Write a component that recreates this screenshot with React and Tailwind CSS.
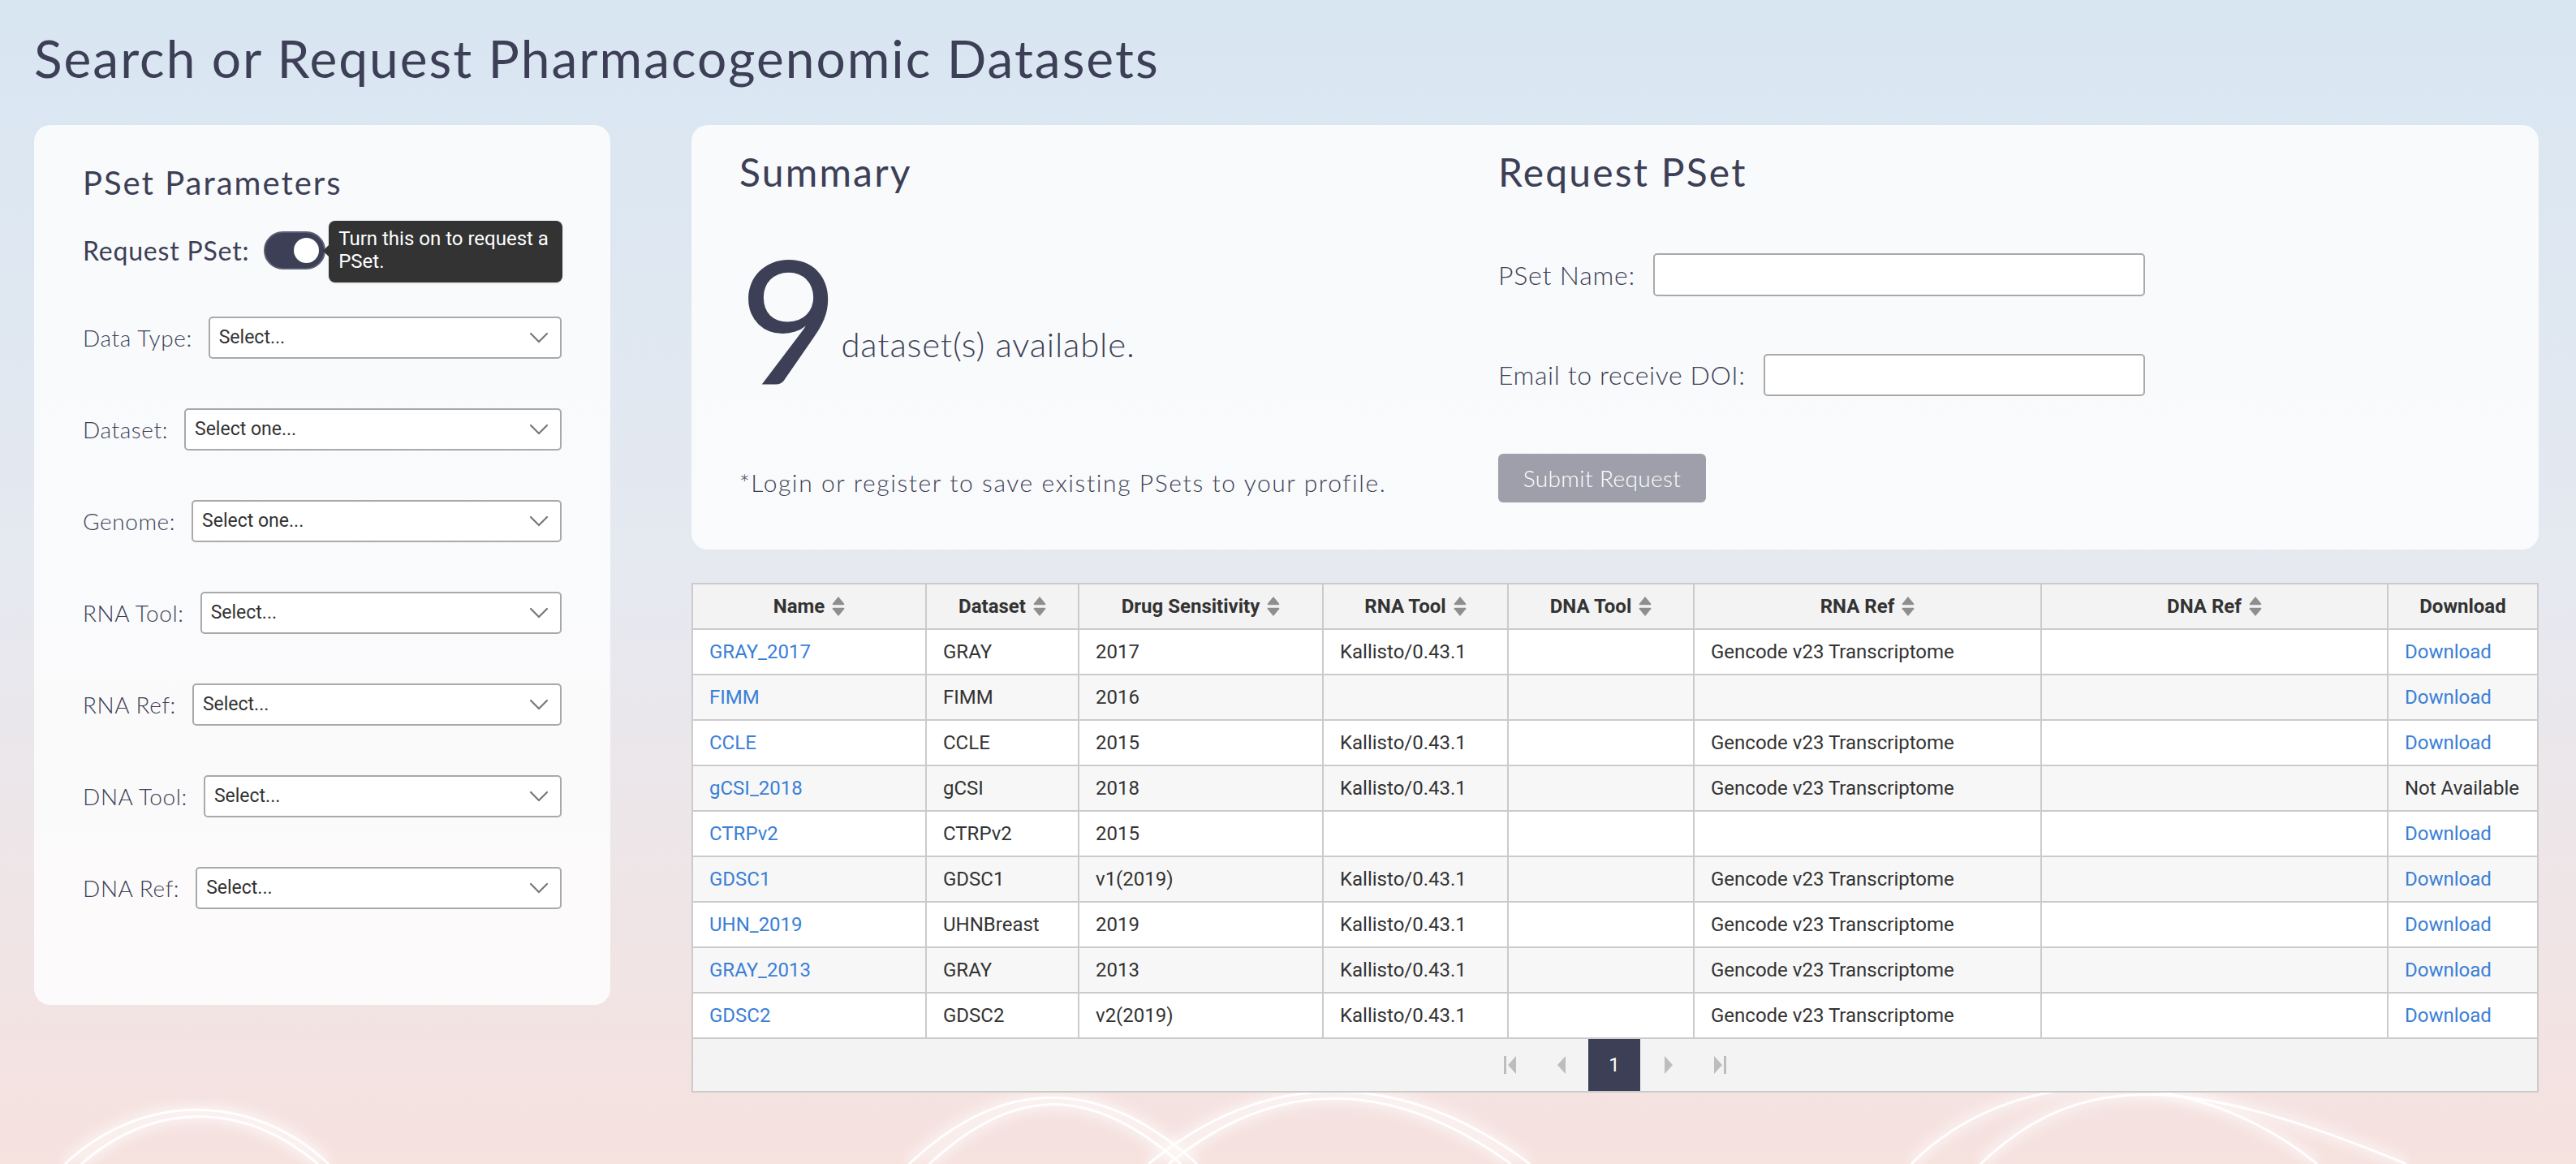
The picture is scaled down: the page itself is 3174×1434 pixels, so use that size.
import React from 'react';

const rows = [
  { name: 'GRAY_2017', dataset: 'GRAY', drug: '2017', rnaTool: 'Kallisto/0.43.1', rnaRef: 'Gencode v23 Transcriptome', dl: true },
  { name: 'FIMM', dataset: 'FIMM', drug: '2016', rnaTool: '', rnaRef: '', dl: true },
  { name: 'CCLE', dataset: 'CCLE', drug: '2015', rnaTool: 'Kallisto/0.43.1', rnaRef: 'Gencode v23 Transcriptome', dl: true },
  { name: 'gCSI_2018', dataset: 'gCSI', drug: '2018', rnaTool: 'Kallisto/0.43.1', rnaRef: 'Gencode v23 Transcriptome', dl: false },
  { name: 'CTRPv2', dataset: 'CTRPv2', drug: '2015', rnaTool: '', rnaRef: '', dl: true },
  { name: 'GDSC1', dataset: 'GDSC1', drug: 'v1(2019)', rnaTool: 'Kallisto/0.43.1', rnaRef: 'Gencode v23 Transcriptome', dl: true },
  { name: 'UHN_2019', dataset: 'UHNBreast', drug: '2019', rnaTool: 'Kallisto/0.43.1', rnaRef: 'Gencode v23 Transcriptome', dl: true },
  { name: 'GRAY_2013', dataset: 'GRAY', drug: '2013', rnaTool: 'Kallisto/0.43.1', rnaRef: 'Gencode v23 Transcriptome', dl: true },
  { name: 'GDSC2', dataset: 'GDSC2', drug: 'v2(2019)', rnaTool: 'Kallisto/0.43.1', rnaRef: 'Gencode v23 Transcriptome', dl: true },
];

const columns = ['Name', 'Dataset', 'Drug Sensitivity', 'RNA Tool', 'DNA Tool', 'RNA Ref', 'DNA Ref', 'Download'];

const filters = [
  { label: 'Data Type:', placeholder: 'Select...' },
  { label: 'Dataset:', placeholder: 'Select one...' },
  { label: 'Genome:', placeholder: 'Select one...' },
  { label: 'RNA Tool:', placeholder: 'Select...' },
  { label: 'RNA Ref:', placeholder: 'Select...' },
  { label: 'DNA Tool:', placeholder: 'Select...' },
  { label: 'DNA Ref:', placeholder: 'Select...' },
];

const gridCols = 'grid grid-cols-[288px_188px_301px_228px_229px_428px_427px_1fr]';

function SortIcon() {
  return (
    <svg width="16" height="26" viewBox="0 0 16 26" className="shrink-0">
      <path d="M8 1 L15.2 9.8 Q15.8 11.2 14.3 11.2 H1.7 Q0.2 11.2 0.8 9.8 Z" fill="#8e8e8e" />
      <path d="M8 25 L15.2 16.2 Q15.8 14.8 14.3 14.8 H1.7 Q0.2 14.8 0.8 16.2 Z" fill="#8e8e8e" />
    </svg>
  );
}

function Chevron() {
  return (
    <svg width="24" height="14" viewBox="0 0 24 14" className="shrink-0">
      <path d="M2 2 L12 12 L22 2" fill="none" stroke="#777" strokeWidth="2.2" strokeLinecap="round" />
    </svg>
  );
}

function Waves() {
  return (
    <svg className="absolute inset-0 w-full h-full pointer-events-none" viewBox="0 0 3174 1434" preserveAspectRatio="none">
      <defs>
        <filter id="glow" x="-20%" y="-20%" width="140%" height="140%">
          <feGaussianBlur stdDeviation="7" />
        </filter>
      </defs>
      {[
        'M80 1434 C175 1345 310 1345 405 1434',
        'M100 1434 C190 1356 300 1356 392 1434',
        'M1120 1434 C1235 1325 1355 1325 1475 1434',
        'M1145 1434 C1250 1336 1345 1336 1455 1434',
        'M1415 1434 C1560 1315 1725 1315 1885 1434',
        'M1440 1434 C1572 1326 1712 1326 1862 1434',
        'M2355 1434 C2480 1308 2700 1308 2855 1434',
        'M2440 1434 C2560 1320 2690 1320 2965 1434',
      ].map((d, i) => (
        <g key={i}>
          <path d={d} fill="none" stroke="#ffffff" strokeWidth="12" opacity="0.55" filter="url(#glow)" />
          <path d={d} fill="none" stroke="#ffffff" strokeWidth="3" opacity="0.9" />
        </g>
      ))}
    </svg>
  );
}

export default function App() {
  return (
    <div className="relative min-h-screen w-full overflow-hidden bg-gradient-to-b from-[#d8e6f2] via-[#e6e9f0] to-[#f6e2df] text-[#3d3f56] font-['Lato',sans-serif]">
      <Waves />
      <div className="relative pl-[42px] pr-[46px] pt-[40px]">
        {/* Page title */}
        <h1 className="text-[64px] leading-none font-normal tracking-[2px]">
          Search or Request Pharmacogenomic Datasets
        </h1>

        <div className="flex gap-[100px] mt-[50px]">
          {/* Parameters panel */}
          <aside className="w-[710px] h-[1084px] shrink-0 rounded-[20px] bg-white/80 px-[60px] pt-[51px]">
            <h2 className="text-[40px] leading-none font-normal tracking-[2px]">PSet Parameters</h2>

            <div className="flex items-center gap-[18px] mt-[40px] h-[47px]">
              <span className="text-[32px] leading-none tracking-[0.8px]">Request PSet:</span>
              <div className="relative">
                <div className="w-[76px] h-[47px] rounded-full bg-[#3d3f56] border-2 border-[#5b5d71] flex items-center justify-end pr-[6px]">
                  <div className="w-[31px] h-[31px] rounded-full bg-white" />
                </div>
                <div className="absolute left-[80px] top-[-13px] w-[288px] h-[76px] rounded-[8px] bg-[#333333] px-[12px] pt-[8px] text-white text-[24px] leading-[28px] font-['Roboto',sans-serif] shadow">
                  <div className="absolute left-[-7px] top-[30px] w-0 h-0 border-y-[7px] border-y-transparent border-r-[7px] border-r-[#333333]" />
                  Turn this on to request a PSet.
                </div>
              </div>
            </div>

            <div className="flex flex-col gap-[61px] mt-[58px]">
              {filters.map((f) => (
                <div key={f.label} className="flex items-center gap-[20px] h-[52px]">
                  <span className="text-[28px] leading-none font-light tracking-[0.6px] whitespace-nowrap">{f.label}</span>
                  <div className="flex-1 h-[52px] bg-white border-2 border-[#a9a9a9] rounded-[5px] flex items-center justify-between pl-[11px] pr-[14px] font-['Roboto',sans-serif] text-[23px] text-[#333]">
                    <span>{f.placeholder}</span>
                    <Chevron />
                  </div>
                </div>
              ))}
            </div>
          </aside>

          {/* Main column */}
          <main className="flex-1 min-w-0">
            <section className="h-[523px] rounded-[20px] bg-white/80 pl-[59px] pt-[34px] flex">
              <div className="w-[935px] shrink-0">
                <h2 className="text-[48px] leading-none font-normal tracking-[2.2px]">Summary</h2>
                <div className="flex items-end gap-[3px] mt-[50px]">
                  <span className="text-[211px] leading-none font-normal">9</span>
                  <span className="text-[42px] leading-none font-light tracking-[0.8px] mb-[52px]">dataset(s) available.</span>
                </div>
                <p className="text-[30px] leading-none font-light tracking-[1.6px] mt-[82px]">
                  *Login or register to save existing PSets to your profile.
                </p>
              </div>

              <div className="flex flex-col">
                <h2 className="text-[48px] leading-none font-normal tracking-[2.2px]">Request PSet</h2>
                <div className="w-[797px] flex items-center gap-[22px] mt-[76px]">
                  <span className="text-[32px] leading-none font-light tracking-[0.8px] whitespace-nowrap">PSet Name:</span>
                  <div className="flex-1 h-[53px] bg-white border-2 border-[#a9a9a9] rounded-[5px]" />
                </div>
                <div className="w-[797px] flex items-center gap-[22px] mt-[71px]">
                  <span className="text-[32px] leading-none font-light tracking-[0.6px] whitespace-nowrap">Email to receive DOI:</span>
                  <div className="flex-1 h-[52px] bg-white border-2 border-[#a9a9a9] rounded-[5px]" />
                </div>
                <button className="mt-[71px] w-[256px] h-[60px] rounded-[6px] bg-[#9e9fab] text-white text-[28px] leading-none font-light tracking-[0.4px]">
                  Submit Request
                </button>
              </div>
            </section>

            {/* Dataset table */}
            <div className="mt-[41px] border-2 border-[#cbcbcb] bg-white font-['Roboto',sans-serif] text-[24px] text-[#333]">
              <div className={`${gridCols} h-[56px] bg-[#f3f3f3] border-b-2 border-[#cbcbcb]`}>
                {columns.map((c, i) => (
                  <div
                    key={c}
                    className={`flex items-center justify-center gap-[9px] font-bold ${i < columns.length - 1 ? 'border-r-2 border-[#cbcbcb]' : ''}`}
                  >
                    <span>{c}</span>
                    {c !== 'Download' && <SortIcon />}
                  </div>
                ))}
              </div>

              {rows.map((r, idx) => {
                const cells = [r.name, r.dataset, r.drug, r.rnaTool, '', r.rnaRef, '', r.dl ? 'Download' : 'Not Available'];
                return (
                  <div
                    key={r.name}
                    className={`${gridCols} h-[56px] border-b-2 border-[#cbcbcb] ${idx % 2 === 1 ? 'bg-[#f7f7f7]' : 'bg-white'}`}
                  >
                    {cells.map((v, i) => (
                      <div
                        key={i}
                        className={`flex items-center pl-[20px] whitespace-nowrap ${i < cells.length - 1 ? 'border-r-2 border-[#cbcbcb]' : ''} ${
                          i === 0 || (i === 7 && r.dl) ? 'text-[#3a7fd6]' : ''
                        }`}
                      >
                        {v}
                      </div>
                    ))}
                  </div>
                );
              })}

              {/* Pagination */}
              <div className="h-[64px] bg-[#f3f3f3] flex items-center justify-center">
                <svg width="15" height="22" viewBox="0 0 15 22">
                  <rect x="0" y="0" width="3" height="22" fill="#bdbdbd" />
                  <path d="M15 0 L5 11 L15 22 Z" fill="#bdbdbd" />
                </svg>
                <svg width="10" height="22" viewBox="0 0 10 22" className="ml-[51px]">
                  <path d="M10 0 L0 11 L10 22 Z" fill="#bdbdbd" />
                </svg>
                <div className="ml-[28px] w-[64px] h-[64px] bg-[#3d3f56] text-white flex items-center justify-center">1</div>
                <svg width="10" height="22" viewBox="0 0 10 22" className="ml-[30px]">
                  <path d="M0 0 L10 11 L0 22 Z" fill="#bdbdbd" />
                </svg>
                <svg width="15" height="22" viewBox="0 0 15 22" className="ml-[51px]">
                  <path d="M0 0 L10 11 L0 22 Z" fill="#bdbdbd" />
                  <rect x="12" y="0" width="3" height="22" fill="#bdbdbd" />
                </svg>
              </div>
            </div>
          </main>
        </div>
      </div>
    </div>
  );
}
